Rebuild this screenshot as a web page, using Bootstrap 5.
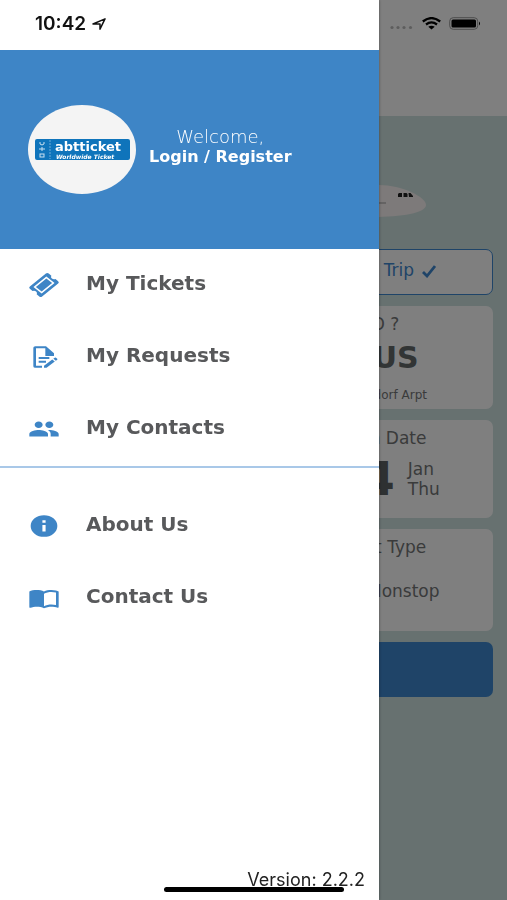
<!DOCTYPE html>
<html lang="en">
<head>
<meta charset="utf-8">
<meta name="viewport" content="width=device-width, initial-scale=1">
<title>abtticket</title>
<link href="https://cdn.jsdelivr.net/npm/bootstrap@5.3.0/dist/css/bootstrap.min.css" rel="stylesheet">
<style>
  body { font-family: "DejaVu Sans", sans-serif; background: #cee2e0; color: #747677; min-height: 100vh; }
  .page-top { height: 116px; background: #fff; }
  .status-icons { padding: 17px 26px 0 0; gap: 8px; }
  .search { padding: 69px 14px 0; }
  .plane { height: 32px; width: 344px; margin-bottom: 32px; }
  .tile { background: #fff; border-radius: 7px; text-align: center; margin-bottom: 11px; width: 100%; padding-left: 10px; }
  .trip { height: 46px; border: 1px solid #3e88d0; color: #3e88d0; font-size: 17px; padding: 0 0 2px 10px; }
  .tile-head, .month, .nonstop { font-size: 17px; line-height: 20px; }
  .to-tile { height: 103px; padding-top: 8px; }
  .code { font-size: 30px; line-height: 36px; font-weight: 700; color: #646a6b; margin: 6px 0 9px; padding-left: 6px; }
  .airport { font-size: 12px; line-height: 20px; }
  .date-tile { height: 98px; padding: 8px 0 0; }
  .day-row { gap: 13px; padding: 6px 0 0 20px; }
  .day { font-size: 46px; line-height: 50px; font-weight: 700; color: #5c6264; }
  .type-tile { height: 102px; padding-top: 8px; }
  .nonstop { margin-top: 24px; }
  .go { height: 55px; background: #3e88d0; }

  .offcanvas.drawer { width: 74.75%; border-right: 0; background: #fff; box-shadow: 0 0 3px #0006; }
  .clock { height: 50px; padding: 0 0 3px 35px; font: 600 19px Inter, sans-serif; color: #111; gap: 6px; }
  .profile { height: 199px; padding-left: 28px; background: #3e85c6; gap: 13px; }
  .logo { width: 108px; height: 89px; }
  .hello { color: #fff; font-size: 16px; line-height: 20px; padding-bottom: 6px; }
  .hello a { color: #fff; }
  .hello .soft { font-weight: 200; font-size: 18px; }
  .menu-row { height: 68px; padding-left: 28px; gap: 26px; color: #58595b; font-size: 20px; font-weight: 700; }
  .menu-row svg { width: 32px; height: 26px; margin-top: 3px; fill: #3e85c6; }
  .menu-set { gap: 4px; padding-bottom: 5px; }
  .split { height: 2px; background: #a9c8e8; }
  .more { padding-top: 22px; }
  .version { font: 18px Inter, sans-serif; color: #222; padding: 0 14px 10px 0; }
  .home-bar { position: fixed; left: 0; right: 0; bottom: 8px; z-index: 1100; }
  .home-bar span { width: 180px; height: 5px; border-radius: 3px; background: #000; }
</style>
<script src="https://cdn.jsdelivr.net/npm/bootstrap@5.3.0/dist/js/bootstrap.bundle.min.js"></script>
</head>
<body>
<header class="page-top">
  <div class="status-icons d-flex justify-content-end">
    <svg width="24" height="13" viewBox="0 0 24 13" fill="#bbb"><circle cx="2" cy="10.500" r="1.600"/><circle cx="8" cy="10.500" r="1.600"/><circle cx="14" cy="10.500" r="1.600"/><circle cx="20.500" cy="10.500" r="1.600"/></svg>
    <svg width="19" height="13" viewBox="0 0 19 13" fill="none" stroke="#000" stroke-width="2.300"><path d="M.8 4.500Q9.500-2.300 18.200 4.500M4 7.500Q9.500 3.300 15 7.500"/><path d="M6.300 9.800Q9.500 7.700 12.700 9.800L9.500 12.600Z" fill="#000" stroke="none"/></svg>
    <svg width="32" height="13" viewBox="0 0 32 13"><rect x=".7" y=".7" width="28" height="11.600" rx="3.500" fill="none" stroke="#999"/><rect x="2.500" y="2.500" width="24.500" height="8" rx="1.500"/><path d="M30 4.500q2 2 0 4z"/></svg>
  </div>
</header>
<main class="search">
  <svg class="plane d-block mx-auto" viewBox="0 0 344 32"><path d="M0 16Q40 0 130 0H297C320 0 344 12 344 20C344 28 320 32 290 32H130Q40 32 0 16Z" fill="#faf4f4"/><path d="M317 8h3v4h-4v-3zM321.500 8h3l1 1v3h-4zM326.500 8h2l2.500 3v1h-4zM291 8h6v2h-6z" fill="#222"/><path d="M270 18h34" stroke="#999"/></svg>
  <div class="row g-0">
    <div class="col-6 offset-6 ps-1">
      <button type="button" class="tile trip d-flex align-items-center justify-content-center gap-2">Round Trip
        <svg width="14" height="13" viewBox="0 0 14 13" fill="none" stroke="#3e88d0" stroke-width="2.800"><path d="M1 7l4 4L13 1"/></svg>
      </button>
      <section class="tile to-tile"><div class="tile-head">TO ?</div><div class="code">DUS</div><div class="airport">Dusseldorf Arpt</div></section>
      <section class="tile date-tile"><div class="tile-head">Return Date</div>
        <div class="day-row d-flex justify-content-center align-items-center"><span class="day">14</span><span class="month text-start">Jan<br>Thu</span></div></section>
      <section class="tile type-tile"><div class="tile-head">Flight Type</div><div class="nonstop ps-5">Nonstop</div></section>
    </div>
  </div>
  <button type="button" class="tile go border-0" aria-label="Search"></button>
</main>
<div class="offcanvas-backdrop fade show"></div>

<aside class="offcanvas offcanvas-start show drawer" tabindex="-1" aria-label="Menu" data-bs-backdrop="false" data-bs-scroll="true">
  <div class="clock d-flex align-items-center flex-shrink-0">10:42
    <svg width="14" height="12" viewBox="0 0 14 12" fill="none" stroke="#111" stroke-width="1.500" stroke-linejoin="round"><path d="M1 6L13 .9L8 11.200V6Z"/></svg>
  </div>
  <div class="profile d-flex align-items-center flex-shrink-0">
    <svg class="logo" viewBox="0 0 108 89" role="img" aria-label="abtticket">
      <ellipse cx="54" cy="44.500" rx="54" ry="44.500" fill="#f4f4f4"/>
      <rect x="7" y="34" width="95" height="21" rx="2" fill="#0f74bb"/>
      <path d="M22 35v19" stroke="#6dabd8" stroke-dasharray="2 1"/>
      <g fill="none" stroke="#c9e0f1"><path d="M12 37v2q2 2 4 0v-2M11 44h6M14 42v4"/><rect x="12" y="49" width="4" height="3"/></g>
      <text x="27" y="46" fill="#fff" font-family="DejaVu Sans, sans-serif" font-weight="700" font-size="13">abtticket</text>
      <text x="28" y="54" fill="#fff" font-family="DejaVu Sans, sans-serif" font-weight="700" font-style="italic" font-size="6">Worldwide Ticket</text>
    </svg>
    <div class="hello text-center"><div class="soft">Welcome,</div><a href="#" class="fw-bold text-decoration-none">Login / Register</a></div>
  </div>
  <nav class="menu-set d-flex flex-column">
    <a href="#" class="menu-row d-flex align-items-center text-decoration-none">
      <svg viewBox="0 0 24 24" preserveAspectRatio="none"><g transform="rotate(-45 12 12)"><path d="M3.500 5.500h17q1.500 0 1.500 1.500v2.800a2.300 2.300 0 0 0 0 4.400v2.800q0 1.500-1.500 1.500h-17q-1.500 0-1.500-1.500v-2.800a2.300 2.300 0 0 0 0-4.400v-2.800q0-1.500 1.500-1.500z"/><rect x="5.800" y="8.300" width="12.400" height="7.400" fill="none" stroke="#fff" stroke-width="1.300"/></g></svg>My Tickets</a>
    <a href="#" class="menu-row d-flex align-items-center text-decoration-none">
      <svg viewBox="0 0 24 24" preserveAspectRatio="none"><path d="M5.500 2H13.500L19.500 8.500v2.500h-6.500V4H6v16h4.500v2H5.500Q4 22 4 20.500v-17Q4 2 5.500 2zM8 12h8v1.800H8zM8 15.500h5.500v1.800H8zM12 20l6.200-5.700 1.900 1.900-6.200 5.800H12zM19 13.500l1-.9q.5-.4 1 0l.9.9q.4.500 0 1l-1 .9z"/></svg>My Requests</a>
    <a href="#" class="menu-row d-flex align-items-center text-decoration-none">
      <svg viewBox="0 0 24 24" preserveAspectRatio="none"><path d="M16 11c1.660 0 2.990-1.340 2.990-3S17.660 5 16 5c-1.660 0-3 1.340-3 3s1.340 3 3 3zm-8 0c1.660 0 2.990-1.340 2.990-3S9.660 5 8 5C6.340 5 5 6.340 5 8s1.340 3 3 3zm0 2c-2.330 0-7 1.170-7 3.500V19h14v-2.500c0-2.330-4.670-3.500-7-3.500zm8 0c-.29 0-.62.02-.97.05 1.160.84 1.970 1.970 1.970 3.450V19h6v-2.500c0-2.330-4.670-3.500-7-3.500z"/></svg>My Contacts</a>
  </nav>
  <div class="split"></div>
  <nav class="menu-set more d-flex flex-column">
    <a href="#" class="menu-row d-flex align-items-center text-decoration-none">
      <svg viewBox="0 0 24 24" preserveAspectRatio="none"><path d="M12 2a10 10 0 1 0 0 20 10 10 0 1 0 0-20zm1.200 15h-2.400v-6h2.400zm0-8h-2.400V6.800h2.400z"/></svg>About Us</a>
    <a href="#" class="menu-row d-flex align-items-center text-decoration-none">
      <svg viewBox="0 0 24 24" preserveAspectRatio="none"><path d="M21 5c-1.110-.35-2.330-.5-3.500-.5-1.950 0-4.050.4-5.500 1.500-1.450-1.100-3.550-1.500-5.500-1.500S2.450 4.900 1 6v14.650c0 .25.25.5.5.5.1 0 .15-.05.25-.05C3.100 20.450 5.050 20 6.500 20c1.950 0 4.050.4 5.500 1.500 1.350-.85 3.800-1.500 5.500-1.500 1.650 0 3.350.3 4.750 1.050.1.05.15.05.25.05.25 0 .5-.25.5-.5V6c-.6-.45-1.250-.75-2-1zm0 13.500c-1.100-.35-2.300-.5-3.500-.5-1.700 0-4.150.65-5.500 1.500V8c1.350-.85 3.800-1.500 5.500-1.500 1.200 0 2.400.15 3.500.5v11.500z"/></svg>Contact Us</a>
  </nav>
  <div class="version text-end mt-auto">Version: 2.2.2</div>
</aside>
<div class="home-bar d-flex justify-content-center"><span></span></div>
</body>
</html>
